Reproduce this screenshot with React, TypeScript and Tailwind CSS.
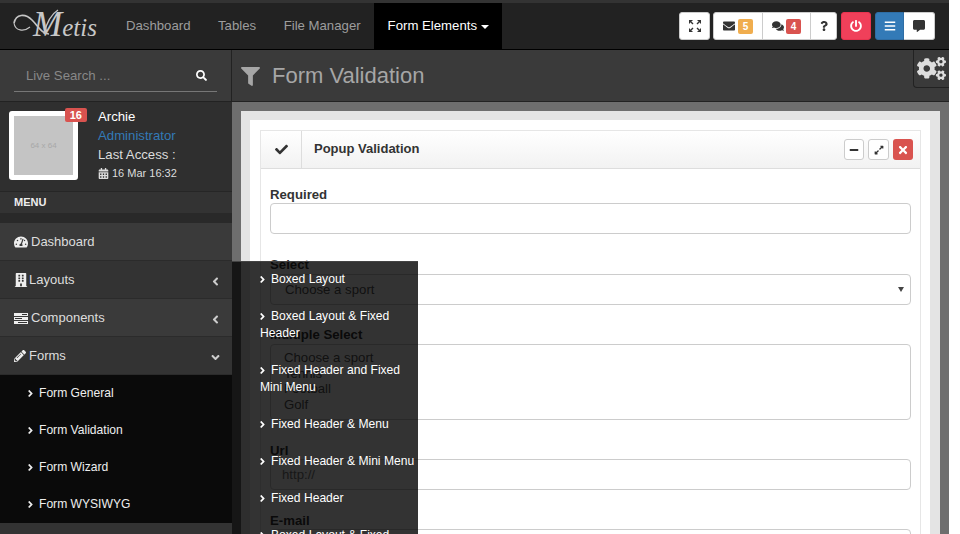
import {
  FaAngleDown,
  FaAngleLeft,
  FaAngleRight,
  FaBars,
  FaBuilding,
  FaCalendarAlt,
  FaCheck,
  FaCogs,
  FaCommentAlt,
  FaComments,
  FaEnvelope,
  FaExpandAlt,
  FaFilter,
  FaMinus,
  FaPencilAlt,
  FaPowerOff,
  FaQuestion,
  FaSearch,
  FaTachometerAlt,
  FaTimes
} from "react-icons/fa";

const sans = "font-['Liberation_Sans',Arial,sans-serif]";

const navLinks = ["Dashboard", "Tables", "File Manager"];

const subItems = ["Form General", "Form Validation", "Form Wizard", "Form WYSIWYG"];

const popupItems = [
  "Boxed Layout",
  "Boxed Layout & Fixed Header",
  "Fixed Header and Fixed Mini Menu",
  "Fixed Header & Menu",
  "Fixed Header & Mini Menu",
  "Fixed Header",
  "Boxed Layout & Fixed Header"
];

const Logo = () => (
  <div className="relative h-[46px] w-[98px] shrink-0 pl-[33px] pt-[1px]">
    <svg
      className="absolute left-0 top-0"
      width="60"
      height="46"
      viewBox="0 0 60 46"
      fill="none"
      stroke="#c4c4c4"
    >
      <path d="M14 20C16 11 25 10 32 17C38 23 42 31 49 31" strokeWidth="1.7" />
      <path d="M14 20C15 28 24 29 30 24" strokeWidth="1.1" />
      <path d="M44 31C46 22 50 12 58 7" strokeWidth="1.4" />
    </svg>
    <span className="font-['Liberation_Serif',serif] italic leading-[42px] text-[#c8c8c8]">
      <span className="text-[35px]">M</span>
      <span className="text-[25px]">etis</span>
    </span>
  </div>
);

// four corner arrows, glyphicon-fullscreen style
const FullscreenIcon = () => (
  <svg width="12" height="12" viewBox="0 0 12 12" fill="currentColor">
    <path d="M0 0h4L0 4zM12 0v4L8 0zM0 12V8l4 4zM12 12H8l4-4z" />
    <path d="M2 2l2 2M10 2L8 4M2 10l2-2M10 10L8 8" stroke="currentColor" strokeWidth="1.4" />
  </svg>
);

// fa-tasks from FA4, the FA5 one is a checklist and looks different
const TasksIcon = () => (
  <svg width="14" height="11" viewBox="0 0 14 11" fill="currentColor">
    <path d="M0 0h14v3H0zM0 4h14v3H0zM0 8h14v3H0z" />
    <path d="M8 1h5v1H8zM1 5h7v1H1zM4 9h9v1H4z" fill="#333" />
  </svg>
);

const Label = ({ children, className = "" }: { children: string; className?: string }) => (
  <label className={`block h-[16px] text-[13.2px] font-bold leading-[18px] text-[#333] ${className}`}>
    {children}
  </label>
);

const MenuRow = ({
  icon,
  iconWidth,
  label,
  arrow,
  className = ""
}: {
  icon: React.ReactNode;
  iconWidth: string;
  label: string;
  arrow?: React.ReactNode;
  className?: string;
}) => (
  <div
    className={`flex h-[38px] items-center border-b border-[#2b2b2b] pl-[14px] pr-[10px] pt-px text-[13px] text-[#ddd] ${className}`}
  >
    <span className={`flex shrink-0 justify-start text-[#eee] ${iconWidth}`}>{icon}</span>
    <span>{label}</span>
    <span className="ml-auto mt-[2px] text-[13px] text-[#ccc]">{arrow}</span>
  </div>
);

export default function App() {
  return (
    <div className={`relative h-[534px] w-[960px] overflow-hidden bg-white ${sans}`}>
      <div className="flex h-full w-[949px] flex-col">
        <div className="h-[3px] shrink-0 bg-[#333]" />

        <header className="flex h-[47px] shrink-0 items-center border-b border-black bg-[#222] text-[13.2px]">
          <Logo />
          {navLinks.map((link, i) => (
            <span key={link} className={`text-[#9d9d9d] ${i === 0 ? "ml-[28px]" : "ml-[27.5px]"}`}>
              {link}
            </span>
          ))}
          <div className="ml-[13px] flex h-[46px] w-[128px] items-center bg-black pl-[14px] text-white">
            Form Elements
            <span className="ml-[4px] mt-[1px] h-0 w-0 border-x-[4px] border-t-[4px] border-x-transparent border-t-white" />
          </div>

          <div className="ml-auto mr-[14px] flex items-center gap-[3px] text-[#333]">
            <button className="flex h-[28px] w-[31px] items-center justify-center rounded-[3px] border border-[#ccc] bg-white text-[12px]">
              <FullscreenIcon />
            </button>
            <div className="flex h-[28px] items-center rounded-[3px] border border-[#ccc] bg-white">
              <span className="flex h-full w-[49px] items-center justify-center gap-[3px] border-r border-[#ccc] text-[12px]">
                <FaEnvelope />
                <span className="rounded-[2px] bg-[#f0ad4e] px-[5px] text-[10px] font-bold leading-[15px] text-white">
                  5
                </span>
              </span>
              <span className="flex h-full w-[48px] items-center justify-center gap-[2px] border-r border-[#ccc] text-[12px]">
                <FaComments />
                <span className="rounded-[2px] bg-[#d9534f] px-[5px] text-[10px] font-bold leading-[15px] text-white">
                  4
                </span>
              </span>
              <span className="flex h-full w-[25px] items-center justify-center text-[10px]">
                <FaQuestion />
              </span>
            </div>
            <button className="ml-px flex h-[28px] w-[30px] items-center justify-center rounded-[3px] border border-[#e8334f] bg-[#f0405a] text-[12px] text-white">
              <FaPowerOff />
            </button>
            <div className="ml-px flex h-[28px] items-center">
              <span className="flex h-full w-[29px] items-center justify-center rounded-l-[3px] border border-[#2e6da4] bg-[#337ab7] text-[12px] text-white">
                <FaBars />
              </span>
              <span className="flex h-full w-[31px] items-center justify-center rounded-r-[3px] border border-l-0 border-[#ccc] bg-white text-[12px]">
                <FaCommentAlt />
              </span>
            </div>
          </div>
        </header>

        <div className="flex min-h-0 flex-1">
          <aside className="flex w-[232px] shrink-0 flex-col bg-[#2b2b2b]">
            <div className="flex h-[52px] shrink-0 items-start border-b border-r border-[#222] bg-[#3a3a3a] px-[14px] pt-[10px]">
              <div className="flex h-[32px] w-[203px] items-center justify-between border-b border-[#777] pl-[12px] pr-[10px] text-[13.2px] text-[#888]">
                <span>Live Search ...</span>
                <FaSearch className="text-[11px] text-white" />
              </div>
            </div>

            <div className="flex h-[90px] shrink-0 gap-[20px] border-b border-[#262626] bg-[#2f2f2f] pl-[9px] pt-[9px]">
              <div className="relative h-[69px] w-[69px] shrink-0 rounded-[3px] border-[5px] border-white bg-[#c4c4c4]">
                <span className="flex h-full items-center justify-center text-[8px] text-[#a8a8a8]">
                  64 x 64
                </span>
                <span className="absolute -right-[14px] -top-[8px] rounded-[2px] bg-[#d9534f] px-[5px] text-[11px] font-bold leading-[14px] text-white">
                  16
                </span>
              </div>
              <div className="-mt-[4px] text-[13.2px] leading-[19px]">
                <div className="text-white">Archie</div>
                <div className="text-[#337ab7]">Administrator</div>
                <div className="text-[#ddd]">Last Access :</div>
                <div className="flex items-center gap-[3px] text-[11px] text-[#ddd]">
                  <FaCalendarAlt className="text-[11px]" />
                  16 Mar 16:32
                </div>
              </div>
            </div>

            <div className="flex h-[21px] shrink-0 items-center bg-[#333] pl-[14px] text-[11px] font-bold text-[#eee]">
              MENU
            </div>
            <div className="h-[10px] shrink-0 bg-[#292929]" />

            <MenuRow
              icon={<FaTachometerAlt className="text-[14px]" />}
              iconWidth="w-[17px]"
              label="Dashboard"
              className="bg-[#3a3a3a]"
            />
            <MenuRow
              icon={<FaBuilding className="text-[14px]" />}
              iconWidth="w-[15px]"
              label="Layouts"
              arrow={<FaAngleLeft />}
              className="bg-[#333]"
            />
            <MenuRow
              icon={<TasksIcon />}
              iconWidth="w-[17px]"
              label="Components"
              arrow={<FaAngleLeft />}
              className="bg-[#3a3a3a]"
            />
            <MenuRow
              icon={<FaPencilAlt className="text-[12px]" />}
              iconWidth="w-[15px]"
              label="Forms"
              arrow={<FaAngleDown />}
              className="bg-[#333]"
            />

            <div className="shrink-0 bg-[#0a0a0a] pl-[25px]">
              {subItems.map((item) => (
                <div key={item} className="flex h-[37px] items-center pb-px text-[12.1px] text-[#eee]">
                  <FaAngleRight className="mr-[3px] text-[11px]" />
                  {item}
                </div>
              ))}
            </div>
            <div className="flex-1 bg-[#333]" />
          </aside>

          <main className="relative flex min-w-0 flex-1 flex-col bg-[#6e6e6e]">
            <div className="flex h-[52px] shrink-0 items-center gap-[12px] border-b border-[#222] bg-[#3a3a3a] pl-[9px] pt-px text-[#a6a6a6]">
              <FaFilter className="text-[19px]" />
              <h1 className="text-[22px] leading-none">Form Validation</h1>
            </div>
            <div className="absolute right-0 top-0 flex h-[38px] w-[36px] items-center justify-center rounded-bl-[4px] border-b border-l border-[#222] bg-[#3a3a3a] text-[29px] text-[#ddd]">
              <FaCogs />
            </div>

            <div className="min-h-0 flex-1 px-[9px] pt-[9px]">
              <div className="h-full border-l-[9px] border-r-[10px] border-t-[9px] border-[#e4e4e4] bg-white pl-[10px] pr-[9px] pt-[10px]">
                <section className="h-[500px] border border-[#e6e6e6]">
                  <div className="flex h-[38px] items-center border-b border-[#ddd] bg-gradient-to-b from-white to-[#f2f2f2] pr-[7px]">
                    <span className="flex h-full w-[41px] items-center justify-center border-r border-[#ddd] text-[13px] text-[#333]">
                      <FaCheck />
                    </span>
                    <h5 className="-mt-[2px] ml-[12px] text-[13px] font-bold text-[#333]">Popup Validation</h5>
                    <div className="ml-auto flex items-center gap-[4px] text-[10px]">
                      <span className="flex h-[21px] w-[20px] items-center justify-center rounded-[3px] border border-[#ccc] bg-white text-[#333]">
                        <FaMinus />
                      </span>
                      <span className="flex h-[21px] w-[21px] items-center justify-center rounded-[3px] border border-[#ccc] bg-white text-[#333]">
                        <FaExpandAlt />
                      </span>
                      <span className="flex h-[21px] w-[20px] items-center justify-center rounded-[3px] bg-[#d9534f] text-[12px] text-white">
                        <FaTimes />
                      </span>
                    </div>
                  </div>

                  <div className="px-[9px] pt-[17px]">
                    <Label>Required</Label>
                    <div className="mt-px h-[31px] rounded-[4px] border border-[#ccc]" />

                    <Label className="mt-[22px]">Select</Label>
                    <div className="mt-[2px] flex h-[31px] items-center justify-between rounded-[4px] border border-[#ccc] pl-[14px] pr-[6px] text-[13.2px] text-[#555]">
                      Choose a sport
                      <span className="h-0 w-0 border-x-[3px] border-t-[5px] border-x-transparent border-t-[#444]" />
                    </div>

                    <Label className="mt-[21px]">Multiple Select</Label>
                    <div className="mt-[2px] h-[76px] rounded-[4px] border border-[#ccc] pl-[13px] pt-[5px] text-[13.2px] leading-[15.7px] text-[#555]">
                      <div>Choose a sport</div>
                      <div>Tennis</div>
                      <div>Football</div>
                      <div>Golf</div>
                    </div>

                    <Label className="mt-[22px]">Url</Label>
                    <div className="mt-px flex h-[31px] items-center rounded-[4px] border border-[#ccc] pl-[11px] text-[13.2px] text-[#777]">
                      http://
                    </div>

                    <Label className="mt-[22px]">E-mail</Label>
                    <div className="mt-px h-[31px] rounded-[4px] border border-[#ccc]" />
                  </div>
                </section>
              </div>
            </div>
          </main>
        </div>
      </div>

      {/* flyout from the Layouts item, sits over the form */}
      <ul className="absolute left-[232px] top-[261px] h-[273px] w-[186px] overflow-hidden border-t border-[#444] bg-black/80 pl-[28px] pr-[2px] text-[12.1px] leading-[17px] text-white">
        {popupItems.map((item, i) => (
          <li key={i} className="pb-[11px] pt-[9px]">
            <FaAngleRight className="-ml-[3px] mr-[3px] inline text-[11px]" />
            {item}
          </li>
        ))}
      </ul>
    </div>
  );
}
